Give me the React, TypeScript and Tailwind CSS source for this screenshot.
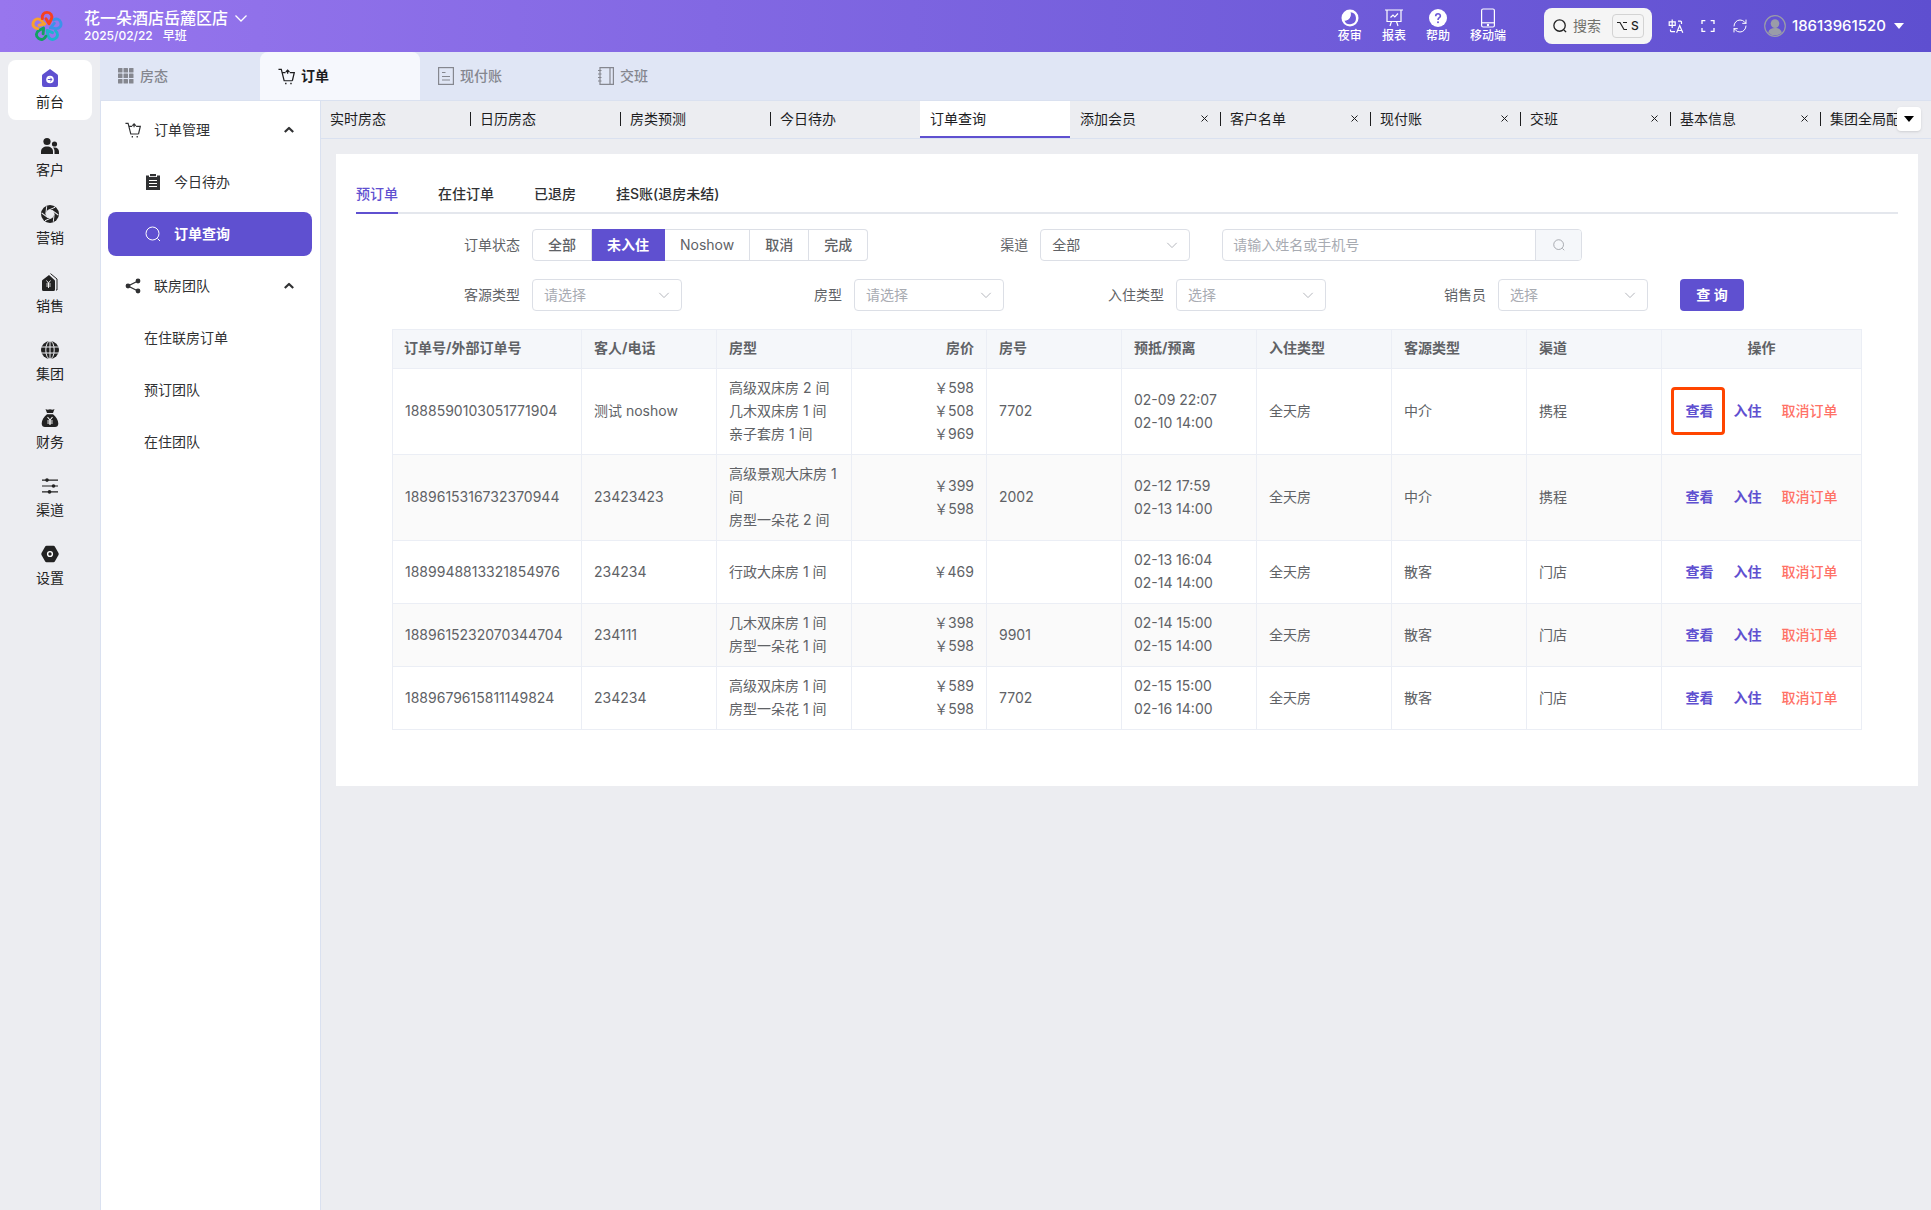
import React, { useState } from 'react';
import { RefreshCw } from 'lucide-react';
import { RiFullscreenLine } from 'react-icons/ri';

type IconProps = { className?: string };

/* ---------- Icons ---------- */

const Logo = () => (
  <svg viewBox="0 0 32 32" className="h-8 w-8" fill="none" strokeWidth="2.9" strokeLinejoin="round" strokeLinecap="round">
    {[
      { color: '#1fb2cf', turn: 144 },
      { color: '#12a163', turn: 216 },
      { color: '#f8a12e', turn: 288 },
      { color: '#3b93ea', turn: 72 },
      { color: '#f7401f', turn: 0 },
    ].map(({ color, turn }) => (
      <path
        key={turn}
        stroke={color}
        transform={`rotate(${turn} 16 16.8)`}
        d="M11.4 8.6C10.6 4.8 12.8 2.4 16 2.4c3.8 0 5.800 3.200 4.400 6.600L18 13.800 15 8.800"
      />
    ))}
  </svg>
);

const ChevronDown = ({ className }: IconProps) => (
  <svg viewBox="0 0 14 14" className={className} fill="none" stroke="currentColor">
    <path d="M1.500 4.500 7 10l5.500-5.500" />
  </svg>
);

const CaretUp = () => (
  <svg viewBox="0 0 12 12" className="h-3 w-3" fill="none" stroke="#303133" strokeWidth="2.200">
    <path d="M1.800 8 6 4l4.200 4" strokeLinejoin="round" />
  </svg>
);

const CaretDown = () => (
  <svg viewBox="0 0 10 6" className="h-[6px] w-[10px]" fill="currentColor">
    <path d="M0 0h10L5 6z" />
  </svg>
);

const SearchIcon = ({ className }: IconProps) => (
  <svg viewBox="0 0 16 16" className={className} fill="none" stroke="currentColor">
    <circle cx="7.500" cy="7.500" r="6.500" />
    <path d="m12.500 12.500 2.500 2.500" />
  </svg>
);

const TranslateIcon = () => (
  <svg viewBox="0 0 16 16" className="h-4 w-4" fill="none" stroke="currentColor" strokeWidth="1.200">
    <path d="M1.200 3.800h6v3.600h-6zM4.200 1.500v8.500" />
    <path d="M10 3.200h2.500a1 1 0 0 1 1 1V6M2.500 11.500v1.200a1 1 0 0 0 1 1H7" />
    <path d="M8.600 14.800 11.700 7.500l3.100 7.300M9.600 12.500h4.200" />
  </svg>
);

const NightIcon = () => (
  <svg viewBox="0 0 18 18" className="h-[18px] w-[18px]">
    <circle cx="9" cy="9" r="8.500" fill="#fff" />
    <path d="M9.400 3.200a6 6 0 1 1-6 8.200c4.200.6 7.200-3.600 6-8.200z" fill="#6f5bd9" />
    <path d="M9.400 3.200c1.200 4.600-1.800 8.800-6 8.200a7 7 0 0 1-.8-3 6.500 6.500 0 0 1 6.800-5.200z" fill="#fff" />
  </svg>
);

const ReportIcon = () => (
  <svg viewBox="0 0 18 18" className="h-[18px] w-[18px]" fill="none" stroke="#fff" strokeWidth="1.200">
    <path d="M0 1h18M2 1v11.500h14V1M6.500 12.500 5 17M11.500 12.500 13 17" />
    <path d="m5.500 8.500 2.500-2.500 1.800 1.800L13 4.500" />
  </svg>
);

const HelpIcon = () => (
  <svg viewBox="0 0 18 18" className="h-[18px] w-[18px]">
    <circle cx="9" cy="9" r="9" fill="#fff" />
    <path d="M6.700 7.200c0-3.200 4.700-3.100 4.700-.2 0 1.700-2.400 1.800-2.400 3.900" fill="none" stroke="#6c58d7" strokeWidth="1.600" />
    <circle cx="9" cy="13.200" r="1" fill="#6c58d7" />
  </svg>
);

const PhoneIcon = () => (
  <svg viewBox="0 0 18 20" className="h-5 w-[18px]" fill="none" stroke="#fff" strokeWidth="1.200">
    <rect x="2.600" y="1" width="12.800" height="18" rx="1.500" />
    <path d="M2.600 14.800h12.800" />
    <circle cx="9" cy="17" r=".6" fill="#fff" />
  </svg>
);

const AvatarIcon = () => (
  <svg viewBox="0 0 22 22" className="h-[22px] w-[22px] text-[#9a9ca8]" fill="currentColor">
    <circle cx="11" cy="11" r="10.300" fill="none" stroke="currentColor" strokeWidth="1.200" />
    <circle cx="11" cy="8.600" r="4.300" />
    <path d="M4.200 17.500c.8-3.200 3.400-4.400 6.800-4.400s6 1.200 6.800 4.400a9.500 9.500 0 0 1-13.600 0z" />
  </svg>
);

const GridIcon = () => (
  <svg viewBox="0 0 16 16" className="h-4 w-4" fill="currentColor">
    {[0, 5.5, 11].map((y) => [0, 5.5, 11].map((x) => <rect key={`${x}-${y}`} x={x} y={y} width="4.500" height="4.500" rx=".5" />))}
  </svg>
);

const CartIcon = ({ className }: IconProps) => (
  <svg viewBox="0 0 18 18" className={className} fill="none" stroke="currentColor" strokeWidth="1.300">
    <path d="M.5 1.500h3l3 12h8.800" />
    <path d="M4.400 5H8M12.500 5h4.700l-2 8.500" />
    <path d="M10.200 6V3M8.300 4.200l1.900-2 1.900 2" />
    <path d="M7.500 16.500h1.500M13 16.500h1.500" strokeWidth="1.600" />
  </svg>
);

const BillIcon = () => (
  <svg viewBox="0 0 16 18" className="h-[18px] w-4" fill="none" stroke="currentColor" strokeWidth="1.200">
    <rect x=".6" y=".6" width="14.800" height="16.800" />
    <path d="M4 5.500h3.500M4 9.500h8M4 13h8" />
  </svg>
);

const NotebookIcon = () => (
  <svg viewBox="0 0 16 18" className="h-[18px] w-4" fill="none" stroke="currentColor" strokeWidth="1.200">
    <path d="M2 .6h13.400v16.800H2zM12 .6v16.800M0 3.500h3.500M0 7h3.500M0 10.500h3.500M0 14h3.500" />
  </svg>
);

const HomeIcon = () => (
  <svg viewBox="0 0 18 18" className="h-[18px] w-[18px]">
    <path d="M9 0 1.500 5.500A2 2 0 0 0 1 7v9a2 2 0 0 0 2 2h12a2 2 0 0 0 2-2V7a2 2 0 0 0-.5-1.500z" fill="#5f50d0" />
    <circle cx="9" cy="10.500" r="3.800" fill="#fff" />
    <path d="M6.800 10.500h4M9.200 8.700l1.800 1.800-1.800 1.800" fill="none" stroke="#5f50d0" />
  </svg>
);

const CustomerIcon = () => (
  <svg viewBox="0 0 18 18" className="h-[18px] w-[18px]" fill="#222">
    <circle cx="6" cy="4.500" r="3.600" />
    <path d="M0 17v-2.500C0 11.500 2.500 9.500 6 9.500s6 2 6 5V17z" />
    <circle cx="13.500" cy="7" r="2.600" />
    <path d="M13.500 17v-2.500c0-1.600-.5-2.900-1.500-3.900 3.500-.8 6 .9 6 4V17z" />
  </svg>
);

const MarketingIcon = () => (
  <svg viewBox="0 0 18 18" className="h-[18px] w-[18px]">
    <circle cx="9" cy="9" r="9" fill="#222" />
    <circle cx="9" cy="9" r="4.200" fill="#ecedf1" />
    {[0, 60, 120, 180, 240, 300].map((turn) => (
      <path key={turn} d="M6.500 5.600 14 2.300" stroke="#ecedf1" transform={`rotate(${turn} 9 9)`} />
    ))}
  </svg>
);

const SalesIcon = () => (
  <svg viewBox="0 0 18 18" className="h-[18px] w-[18px]" fill="none">
    <path d="M8 2 1.500 7A1.500 1.500 0 0 0 1 8.200V16.500A1.500 1.500 0 0 0 2.500 18h10A1.500 1.500 0 0 0 14 16.500V8.200A1.500 1.500 0 0 0 13.500 7z" fill="#222" />
    <path d="M9.500.6 16 6v11h-1" stroke="#222" />
    <path d="m5.500 7.500 2 2.500 2-2.500M7.500 10v5M5.200 11h4.600M5.200 13h4.600" stroke="#fff" strokeWidth=".9" />
  </svg>
);

const GlobeIcon = () => (
  <svg viewBox="0 0 18 18" className="h-[18px] w-[18px]" fill="none">
    <circle cx="9" cy="9" r="9" fill="#222" />
    <path d="M0 6h18M0 12h18M9 0v18" stroke="#ecedf1" />
    <ellipse cx="9" cy="9" rx="4.200" ry="9" stroke="#ecedf1" />
  </svg>
);

const FinanceIcon = () => (
  <svg viewBox="0 0 18 18" className="h-[18px] w-[18px]" fill="none">
    <path d="M4.500 0c1.500 1 3 .8 4.500.2 1.500.6 3 .8 4.500-.2l-1.500 4H6zM6 5.200h6c3 2.300 5.300 6 5.300 9.300C17.300 17 16 18 14 18H4C2 18 .7 17 .7 14.500.7 11.200 3 7.500 6 5.200z" fill="#222" />
    <path d="m6.500 8 2.500 3 2.500-3M9 11v5M6.200 12h5.600M6.200 14h5.600" stroke="#fff" strokeWidth="1.100" />
  </svg>
);

const ChannelIcon = () => (
  <svg viewBox="0 0 18 18" className="h-[18px] w-[18px]" fill="#222">
    <path d="M1 2.500h16v1.200H1zM1 8.400h16v1.200H1zM1 14.300h16v1.200H1z" />
    <circle cx="6" cy="3.100" r="1.800" />
    <circle cx="12.500" cy="9" r="1.800" />
    <circle cx="8.500" cy="14.900" r="1.800" />
  </svg>
);

const SettingsIcon = () => (
  <svg viewBox="0 0 18 18" className="h-[18px] w-[18px]">
    <path d="M5.500.8h7c.6 0 1 .2 1.300.7l3.700 6.500c.3.600.3 1.300 0 1.900l-3.700 6.600c-.3.500-.7.700-1.300.7h-7c-.6 0-1-.2-1.300-.7L.5 9.900c-.3-.6-.3-1.300 0-1.900l3.700-6.500c.3-.5.7-.7 1.300-.7z" fill="#222" />
    <circle cx="9" cy="9" r="2.400" fill="none" stroke="#fff" strokeWidth="1.400" />
  </svg>
);

const TodoIcon = () => (
  <svg viewBox="0 0 14 16" className="h-4 w-[14px]">
    <path d="M0 1.500h3V3h8V1.500h3V16H0z" fill="#303133" />
    <path d="M4 0h6v2.200H4z" fill="#303133" />
    <path d="M3 6.500h8M3 9.500h8M3 12.500h8" stroke="#fff" />
  </svg>
);

const ShareIcon = () => (
  <svg viewBox="0 0 16 16" className="h-4 w-4" fill="#303133">
    <path d="M13 3 3 8l10 5" fill="none" stroke="#303133" strokeWidth="1.300" />
    <circle cx="3" cy="8" r="2.400" />
    <circle cx="13" cy="3" r="2.400" />
    <circle cx="13" cy="13" r="2.400" />
  </svg>
);

/* ---------- Data ---------- */

const quickLinks = [
  { label: '夜审', icon: <NightIcon /> },
  { label: '报表', icon: <ReportIcon /> },
  { label: '帮助', icon: <HelpIcon /> },
  { label: '移动端', icon: <PhoneIcon /> },
];

const modules = [
  { label: '前台', icon: <HomeIcon /> },
  { label: '客户', icon: <CustomerIcon /> },
  { label: '营销', icon: <MarketingIcon /> },
  { label: '销售', icon: <SalesIcon /> },
  { label: '集团', icon: <GlobeIcon /> },
  { label: '财务', icon: <FinanceIcon /> },
  { label: '渠道', icon: <ChannelIcon /> },
  { label: '设置', icon: <SettingsIcon /> },
];

const sections = [
  { label: '房态', icon: <GridIcon /> },
  { label: '订单', icon: <CartIcon className="h-[17px] w-[17px]" /> },
  { label: '现付账', icon: <BillIcon /> },
  { label: '交班', icon: <NotebookIcon /> },
];

const pageTabs = [
  { label: '实时房态', closable: false },
  { label: '日历房态', closable: false },
  { label: '房类预测', closable: false },
  { label: '今日待办', closable: false },
  { label: '订单查询', closable: false },
  { label: '添加会员', closable: true },
  { label: '客户名单', closable: true },
  { label: '现付账', closable: true },
  { label: '交班', closable: true },
  { label: '基本信息', closable: true },
  { label: '集团全局配置', closable: true },
];

const orderTabs = ['预订单', '在住订单', '已退房', '挂S账(退房未结)'];
const statuses = ['全部', '未入住', 'Noshow', '取消', '完成'];

const columns = ['订单号/外部订单号', '客人/电话', '房型', '房价', '房号', '预抵/预离', '入住类型', '客源类型', '渠道', '操作'];

const orders = [
  {
    id: '1888590103051771904',
    guest: '测试 noshow',
    rooms: ['高级双床房 2 间', '几木双床房 1 间', '亲子套房 1 间'],
    prices: [598, 508, 969],
    roomNo: '7702',
    dates: ['02-09 22:07', '02-10 14:00'],
    source: '中介',
    channel: '携程',
  },
  {
    id: '1889615316732370944',
    guest: '23423423',
    rooms: ['高级景观大床房 1 间', '房型一朵花 2 间'],
    prices: [399, 598],
    roomNo: '2002',
    dates: ['02-12 17:59', '02-13 14:00'],
    source: '中介',
    channel: '携程',
  },
  {
    id: '1889948813321854976',
    guest: '234234',
    rooms: ['行政大床房 1 间'],
    prices: [469],
    roomNo: '',
    dates: ['02-13 16:04', '02-14 14:00'],
    source: '散客',
    channel: '门店',
  },
  {
    id: '1889615232070344704',
    guest: '234111',
    rooms: ['几木双床房 1 间', '房型一朵花 1 间'],
    prices: [398, 598],
    roomNo: '9901',
    dates: ['02-14 15:00', '02-15 14:00'],
    source: '散客',
    channel: '门店',
  },
  {
    id: '1889679615811149824',
    guest: '234234',
    rooms: ['高级双床房 1 间', '房型一朵花 1 间'],
    prices: [589, 598],
    roomNo: '7702',
    dates: ['02-15 15:00', '02-16 14:00'],
    source: '散客',
    channel: '门店',
  },
];

/* ---------- Layout parts ---------- */

const Header = () => (
  <header className="flex h-13 shrink-0 items-center justify-between bg-linear-to-r from-[#9876ee] to-[#5e4fd0] pr-[27px] pl-[31px] text-white">
    <div className="flex items-center">
      <Logo />
      <div className="ml-[21px]">
        <button className="flex items-center gap-[6px] text-base leading-5 font-medium">
          花一朵酒店岳麓区店
          <ChevronDown className="h-[14px] w-[14px] stroke-[1.3]" />
        </button>
        <p className="flex gap-[10px] text-xs leading-4 font-medium">
          <span>2025/02/22</span>
          <span>早班</span>
        </p>
      </div>
    </div>

    <div className="flex items-center">
      <nav className="flex gap-5">
        {quickLinks.map(({ label, icon }) => (
          <button key={label} className="flex flex-col items-center text-xs leading-4 font-medium">
            <span className="flex h-5 items-center">{icon}</span>
            {label}
          </button>
        ))}
      </nav>
      <button className="ml-[38px] flex h-9 items-center rounded-lg bg-[#f5f5f5] pr-2 pl-[9px] text-sm text-[#71706b]">
        <SearchIcon className="mr-[6px] h-[14px] w-[14px] stroke-[1.5] text-[#222]" />
        搜索
        <kbd className="ml-[11px] flex h-6 w-8 items-center justify-center gap-1 rounded border border-[#d3d3d3] font-[Inter] text-xs font-medium text-[#222]">
          <svg viewBox="0 0 10 10" className="h-[10px] w-[10px]" fill="none" stroke="currentColor" strokeWidth="1.200">
            <path d="M0 1.500h3l4 7h3M6 1.500h4" />
          </svg>
          S
        </kbd>
      </button>
      <div className="ml-4 flex items-center gap-4">
        <button aria-label="语言"><TranslateIcon /></button>
        <button aria-label="全屏"><RiFullscreenLine className="h-4 w-4" /></button>
        <button aria-label="刷新"><RefreshCw className="h-4 w-4" strokeWidth={1.5} /></button>
      </div>
      <button className="ml-4 flex items-center text-[15px] font-medium">
        <AvatarIcon />
        <span className="mr-2 ml-[6px]">18613961520</span>
        <CaretDown />
      </button>
    </div>
  </header>
);

const ModuleBar = () => (
  <nav className="flex w-25 shrink-0 flex-col gap-2 bg-[#ecedf1] p-2">
    {modules.map(({ label, icon }, i) => (
      <button
        key={label}
        className={`flex h-15 flex-col items-center justify-center gap-1 rounded-lg text-sm leading-5 text-[#222] ${i === 0 ? 'bg-white' : ''}`}
      >
        <span className="flex h-5 items-center">{icon}</span>
        {label}
      </button>
    ))}
  </nav>
);

const SectionTabs = () => (
  <nav className="flex h-[49px] shrink-0 border-b border-[#dae1f0] bg-[#e0e6f5]">
    {sections.map(({ label, icon }) => (
      <button
        key={label}
        className={`flex w-40 items-center gap-[6px] pl-[18px] text-sm ${
          label === '订单' ? 'rounded-t-lg bg-[#f6f8fd] font-bold text-[#1d1d1f]' : 'font-medium text-[#85878f]'
        }`}
      >
        {icon}
        {label}
      </button>
    ))}
  </nav>
);

const MenuGroup = ({ icon, label, children }: { icon: React.ReactNode; label: string; children: React.ReactNode }) => (
  <>
    <button className="flex h-11 items-center px-[17px] text-sm text-[#303133]">
      <span className="mr-[13px] flex w-4 justify-center">{icon}</span>
      <span className="flex-1 text-left">{label}</span>
      <CaretUp />
    </button>
    {children}
  </>
);

const SideMenu = () => (
  <aside className="flex w-55 shrink-0 flex-col gap-2 border-l border-[#dae1f0] bg-white pt-[7px] pr-2 pl-[7px] text-sm text-[#303133]">
    <MenuGroup icon={<CartIcon className="h-4 w-4" />} label="订单管理">
      <a href="#todo" className="flex h-11 items-center gap-[14px] pl-[38px]">
        <TodoIcon />
        今日待办
      </a>
      <a href="#orders" className="flex h-11 items-center gap-[13px] rounded-lg bg-[#5f50d0] pl-[37px] font-bold text-white">
        <SearchIcon className="h-4 w-4" />
        订单查询
      </a>
    </MenuGroup>
    <MenuGroup icon={<ShareIcon />} label="联房团队">
      {['在住联房订单', '预订团队', '在住团队'].map((label) => (
        <a key={label} href="#team" className="flex h-11 items-center pl-9">{label}</a>
      ))}
    </MenuGroup>
  </aside>
);

const PageTabs = () => (
  <div className="relative flex h-[38px] shrink-0 overflow-hidden border-b border-[#dae1f0] text-sm text-[#1d1d1f]">
    {pageTabs.map(({ label, closable }, i) => {
      const active = label === '订单查询';
      const divider = i > 0 && !active && pageTabs[i - 1].label !== '订单查询';
      return (
        <div
          key={label}
          className={`flex w-[150px] shrink-0 items-center border-b-2 ${active ? 'border-[#5f50d0] bg-white' : 'border-transparent'}`}
        >
          <span className={`h-[14px] w-px ${divider ? 'bg-[#1d1d1f]' : ''}`} />
          <button className="flex-1 pl-[9px] text-left whitespace-nowrap">{label}</button>
          {closable && (
            <button aria-label={`关闭${label}`} className="mr-3">
              <svg viewBox="0 0 7 7" className="h-[7px] w-[7px]" stroke="currentColor">
                <path d="m.5.5 6 6M6.500.5l-6 6" />
              </svg>
            </button>
          )}
        </div>
      );
    })}
    <button aria-label="更多" className="absolute top-[6px] right-[10px] flex h-6 w-6 items-center justify-center rounded bg-white text-black shadow-sm">
      <CaretDown />
    </button>
  </div>
);

const SelectField = ({ id, label, options, filled }: { id: string; label: string; options: string[]; filled?: boolean }) => (
  <div className="flex h-8 items-center">
    <label htmlFor={id} className="w-[140px] pr-3 text-right">{label}</label>
    <div className="relative">
      <select
        id={id}
        className={`h-8 w-[150px] appearance-none rounded border border-[#dcdfe6] bg-white px-[11px] ${filled ? 'text-[#606266]' : 'text-[#a8abb2]'}`}
      >
        {options.map((option) => <option key={option}>{option}</option>)}
      </select>
      <ChevronDown className="pointer-events-none absolute top-[10px] right-3 h-3 w-3 text-[#a8abb2]" />
    </div>
  </div>
);

const Filters = () => {
  const [status, setStatus] = useState('未入住');

  return (
    <form className="mx-9 mt-[15px] flex flex-wrap gap-x-8 gap-y-[18px]" onSubmit={(e) => e.preventDefault()}>
      <div className="flex h-8 items-center" role="radiogroup" aria-labelledby="status-label">
        <span id="status-label" className="w-[140px] pr-3 text-right">订单状态</span>
        {statuses.map((item) => (
          <label
            key={item}
            className={`flex h-8 cursor-pointer items-center border-y border-r px-[15px] first-of-type:rounded-l first-of-type:border-l last-of-type:rounded-r ${
              status === item ? 'border-[#5f50d0] bg-[#5f50d0] font-bold text-white' : 'border-[#dcdfe6] font-medium'
            }`}
          >
            <input type="radio" name="status" className="sr-only" checked={status === item} onChange={() => setStatus(item)} />
            <span className={item === 'Noshow' ? 'font-normal' : ''}>{item}</span>
          </label>
        ))}
      </div>
      <SelectField id="channel" label="渠道" options={['全部']} filled />
      <div className="flex h-8 w-[360px] overflow-hidden rounded border border-[#dcdfe6]">
        <input
          type="text"
          aria-label="姓名或手机号"
          placeholder="请输入姓名或手机号"
          className="min-w-0 flex-1 px-[10px] outline-none placeholder:text-[#a8abb2]"
        />
        <button type="button" aria-label="搜索" className="flex w-[46px] items-center justify-center border-l border-[#dcdfe6] bg-[#f5f7fa] text-[#909399]">
          <SearchIcon className="h-3 w-3" />
        </button>
      </div>
      <SelectField id="source" label="客源类型" options={['请选择']} />
      <SelectField id="room-type" label="房型" options={['请选择']} />
      <SelectField id="stay-type" label="入住类型" options={['选择']} />
      <SelectField id="seller" label="销售员" options={['选择']} />
      <button type="submit" className="h-8 w-16 rounded bg-[#5f50d0] font-bold text-white">查 询</button>
    </form>
  );
};

const OrdersTable = () => (
  <div className="mx-9 mt-[18px]">
    <table className="w-full table-fixed border-separate border-spacing-0 border-l border-[#ebeef5] leading-[23px]">
      <colgroup>
        <col className="w-[189px]" />
        {columns.slice(1, 9).map((name) => <col key={name} />)}
        <col className="w-[200px]" />
      </colgroup>
      <thead>
        <tr className="bg-[#f5f7fa]">
          {columns.map((name) => (
            <th
              key={name}
              className={`h-10 border-y border-r border-[#ebeef5] px-3 pb-1 font-bold first:pl-[11px] ${
                name === '房价' ? 'text-right' : name === '操作' ? 'text-center' : 'text-left'
              }`}
            >
              {name}
            </th>
          ))}
        </tr>
      </thead>
      <tbody className="[&_td]:border-r [&_td]:border-b [&_td]:border-[#ebeef5] [&_td]:px-3 [&_td]:pt-[7px] [&_td]:pb-[9px]">
        {orders.map((order, i) => (
          <tr key={order.id} className="even:bg-[#fafafa]">
            <td>{order.id}</td>
            <td>{order.guest}</td>
            <td>{order.rooms.map((room) => <div key={room}>{room}</div>)}</td>
            <td className="text-right">{order.prices.map((price) => <div key={price}>￥{price}</div>)}</td>
            <td>{order.roomNo}</td>
            <td>{order.dates.map((date) => <div key={date}>{date}</div>)}</td>
            <td>全天房</td>
            <td>{order.source}</td>
            <td>{order.channel}</td>
            <td>
              <div className="flex justify-center gap-5 font-bold text-[#5f50d0]">
                <a href="#view" className="relative">
                  查看
                  {i === 0 && (
                    <span className="absolute -top-3 -right-[11px] -bottom-[13px] -left-[15px] rounded border-3 border-[#ff4500]" />
                  )}
                </a>
                <a href="#checkin">入住</a>
                <a href="#cancel" className="font-medium text-[#ff7166]">取消订单</a>
              </div>
            </td>
          </tr>
        ))}
      </tbody>
    </table>
  </div>
);

export default function App() {
  const [orderTab, setOrderTab] = useState(orderTabs[0]);

  return (
    <div className="flex min-h-screen flex-col bg-[#ecedf1] font-['Inter','Noto_Sans_CJK_SC',sans-serif] text-sm text-[#606266]">
      <Header />
      <div className="flex flex-1">
        <ModuleBar />
        <div className="flex min-w-0 flex-1 flex-col">
          <SectionTabs />
          <div className="flex flex-1">
            <SideMenu />
            <div className="flex min-w-0 flex-1 flex-col shadow-[inset_1px_0_0_#dae1f0]">
              <PageTabs />
              <main className="mt-[15px] mr-[13px] ml-4 bg-white px-5 pt-5 pb-14">
                <div className="flex h-10 gap-10 border-b-2 border-[#e4e7ed]">
                  {orderTabs.map((tab) => (
                    <button
                      key={tab}
                      onClick={() => setOrderTab(tab)}
                      className={`-mb-[2px] border-b-2 pt-[2px] font-medium ${
                        orderTab === tab ? 'border-[#5f50d0] text-[#5f50d0]' : 'border-transparent text-[#303133]'
                      }`}
                    >
                      {tab}
                    </button>
                  ))}
                </div>
                <Filters />
                <OrdersTable />
              </main>
            </div>
          </div>
        </div>
      </div>
    </div>
  );
}
